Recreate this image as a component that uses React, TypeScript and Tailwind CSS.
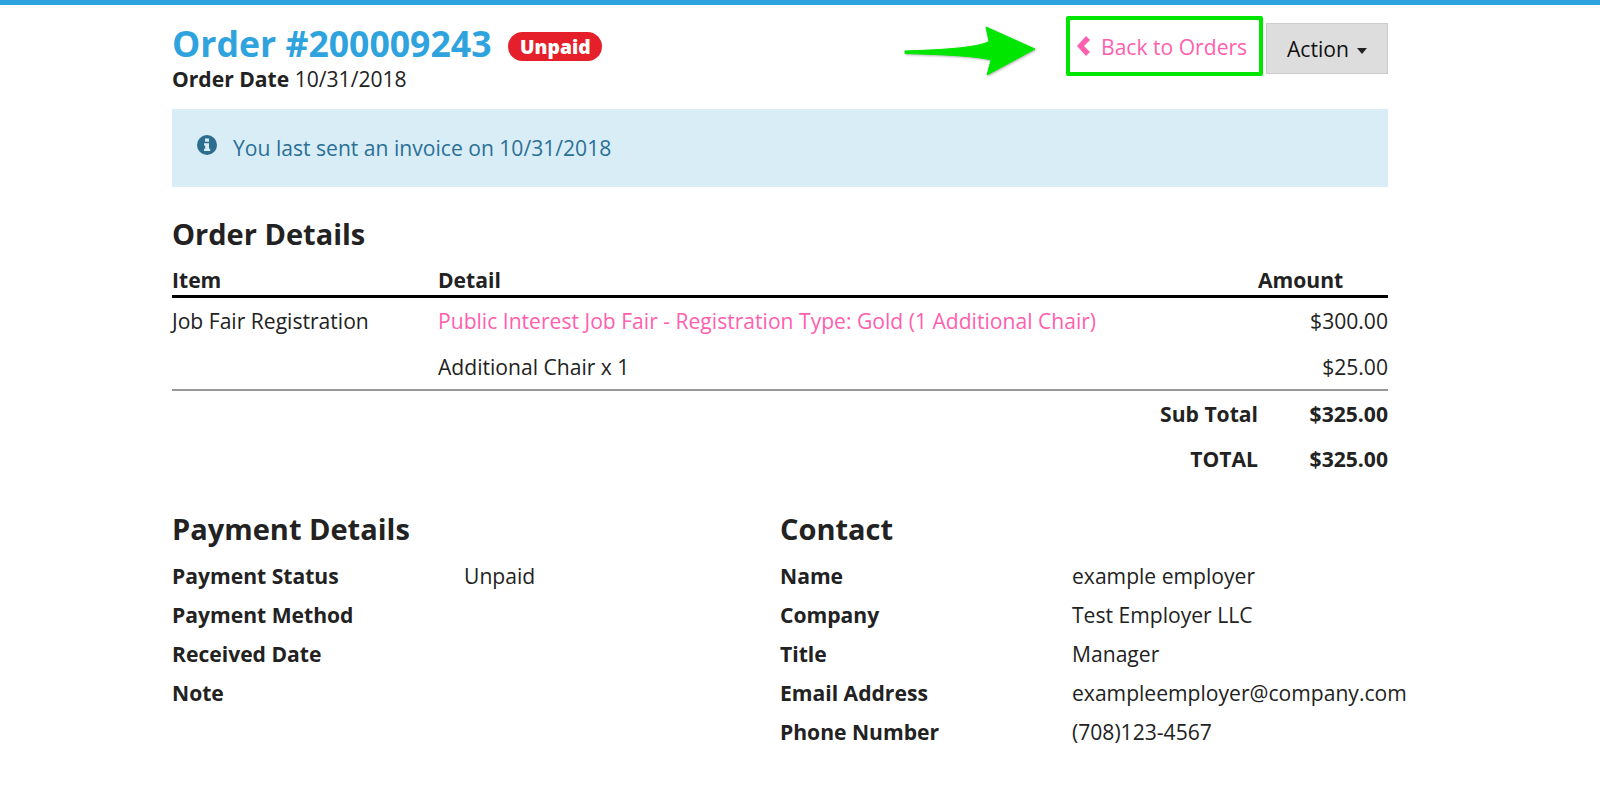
function Arrow() {
  return (
    <svg width="132" height="51" viewBox="0 0 132 51" className="drop-shadow-[1px_1px_1px_rgba(0,0,0,0.3)]">
      <path
        d="M1 25 C30 24 72 22.5 85 15.5 L82 1 L131 23 L83 49 L87 34 C70 29.5 30 28.5 1 27.5 Z"
        fill="#00e600"
        stroke="#00e600"
        strokeLinejoin="round"
      />
    </svg>
  );
}

function ChevronIcon() {
  return (
    <svg width="13" height="20" viewBox="0 0 13 20" className="mt-[-2px] mr-[11px]">
      <path d="M9 0 L13 4 L7 10 L13 16 L9 20 L0 10 Z" fill="#ff5fae" />
    </svg>
  );
}

function InfoIcon() {
  return (
    <svg width="20" height="20" viewBox="0 0 20 20" className="mt-[-6px] mr-[16px]">
      <circle cx="10" cy="10" r="10" fill="#2c6e8f" />
      <rect x="8" y="3.5" width="4" height="3.2" fill="#d9edf7" />
      <path d="M7 8.3 H12 V13.8 H13.2 V16 H7 V13.8 H8.2 V10.5 H7 Z" fill="#d9edf7" />
    </svg>
  );
}

function DetailRow({ label, value }: { label: string; value?: string }) {
  return (
    <div className="grid h-[39px] grid-cols-[292px_1fr] items-center whitespace-nowrap">
      <div className="font-bold">{label}</div>
      <div>{value}</div>
    </div>
  );
}

function App() {
  return (
    <div className="h-[798px] overflow-hidden bg-white font-['Open_Sans',sans-serif] text-[21.1px] text-[#222]">
      <div className="h-[5px] bg-[#2ea3dd]" />
      <div className="ml-[172px] w-[1216px]">
        <div className="flex h-[104px] justify-between">
          <div className="pt-[18px]">
            <div className="flex items-center gap-[17px]">
              <h1 className="text-[35.6px] leading-[40px] font-bold text-[#2ea3dd]">Order #200009243</h1>
              <span className="mt-[7px] rounded-full bg-[#e5202b] px-[11.5px] text-[19.3px] leading-[29px] font-extrabold text-white">
                Unpaid
              </span>
            </div>
            <div className="mt-[2px] leading-[28px]">
              <span className="font-bold">Order Date</span> 10/31/2018
            </div>
          </div>
          <div className="flex items-start">
            <div className="mt-[21px] mr-[30px]">
              <Arrow />
            </div>
            <a className="mt-[11px] flex h-[60px] w-[197px] items-center rounded-[2px] border-[4px] border-[#00e600] pt-[1px] pl-[7px] whitespace-nowrap text-[#ff5fae]">
              <ChevronIcon />
              Back to Orders
            </a>
            <button className="mt-[18px] ml-[3px] flex h-[51px] w-[122px] items-center justify-center gap-[8px] border border-[#ccc] bg-[#ddd] pt-[1px] text-[#111]">
              Action
              <span className="mt-[4px] border-x-[5.5px] border-t-[6px] border-x-transparent border-t-[#222]" />
            </button>
          </div>
        </div>

        <div className="flex h-[78px] items-center bg-[#d9edf7] pl-[25px] text-[#2a7096]">
          <InfoIcon />
          You last sent an invoice on 10/31/2018
        </div>

        <h2 className="mt-[28px] text-[29px] leading-[38px] font-bold">Order Details</h2>

        <div className="mt-[11px] grid h-[34px] grid-cols-[266px_1fr_130px] items-start border-b-[3px] border-black font-bold">
          <div>Item</div>
          <div>Detail</div>
          <div>Amount</div>
        </div>
        <div className="grid h-[47px] grid-cols-[266px_1fr_130px] items-center pb-[2px]">
          <div>Job Fair Registration</div>
          <a className="text-[#ff5fae]">Public Interest Job Fair - Registration Type: Gold (1 Additional Chair)</a>
          <div className="text-right">$300.00</div>
        </div>
        <div className="grid h-[46px] grid-cols-[266px_1fr_130px] items-center border-b-2 border-[#999] pb-[1px]">
          <div />
          <div>Additional Chair x 1</div>
          <div className="text-right">$25.00</div>
        </div>
        <div className="grid h-[45px] grid-cols-[1fr_130px] items-center font-bold">
          <div className="text-right">Sub Total</div>
          <div className="text-right">$325.00</div>
        </div>
        <div className="grid h-[46px] grid-cols-[1fr_130px] items-center font-bold">
          <div className="text-right">TOTAL</div>
          <div className="text-right">$325.00</div>
        </div>

        <div className="mt-[28px] grid grid-cols-[608px_1fr]">
          <div>
            <h2 className="mb-[8px] text-[29px] leading-[38px] font-bold">Payment Details</h2>
            <DetailRow label="Payment Status" value="Unpaid" />
            <DetailRow label="Payment Method" />
            <DetailRow label="Received Date" />
            <DetailRow label="Note" />
          </div>
          <div>
            <h2 className="mb-[8px] text-[29px] leading-[38px] font-bold">Contact</h2>
            <DetailRow label="Name" value="example employer" />
            <DetailRow label="Company" value="Test Employer LLC" />
            <DetailRow label="Title" value="Manager" />
            <DetailRow label="Email Address" value="exampleemployer@company.com" />
            <DetailRow label="Phone Number" value="(708)123-4567" />
          </div>
        </div>
      </div>
    </div>
  );
}

export default App;
